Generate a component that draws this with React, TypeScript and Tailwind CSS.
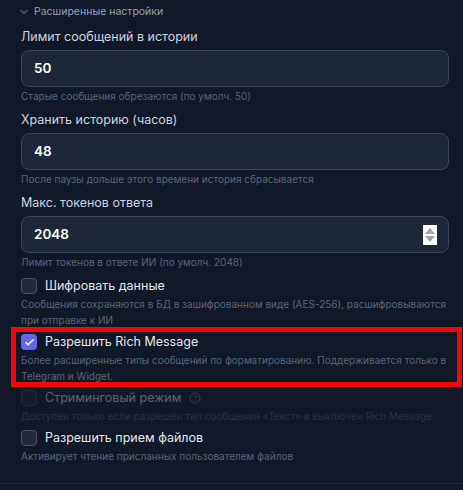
import { ChevronDown, Check, HelpCircle } from 'lucide-react';

interface NumberFieldProps {
  label: string;
  value: string;
  hint: string;
  spinner?: boolean;
}

const NumberField = ({ label, value, hint, spinner }: NumberFieldProps) => (
  <div className="flex flex-col">
    <label className="text-[12.5px] leading-5 text-[#cbd5e1] mb-[3px]">{label}</label>
    <div className="h-[37px] rounded-lg border border-[#3b4556] bg-[#1e2737] flex items-center pl-3 pr-3">
      <span className="flex-1 text-[13.5px] font-semibold text-white">{value}</span>
      {spinner && (
        <div className="w-[14px] h-[20px] bg-white flex flex-col items-center justify-between py-[3px] mr-[-1px]">
          <div className="w-0 h-0 border-l-[5px] border-r-[5px] border-b-[6px] border-l-transparent border-r-transparent border-b-[#9ca3af]" />
          <div className="w-0 h-0 border-l-[5px] border-r-[5px] border-t-[6px] border-l-transparent border-r-transparent border-t-[#9ca3af]" />
        </div>
      )}
    </div>
    <p className="mt-[1px] text-[10px] leading-4 text-[#5b6577]">{hint}</p>
  </div>
);

interface CheckItemProps {
  label: string;
  desc: string;
  checked?: boolean;
  disabled?: boolean;
  help?: boolean;
}

const CheckItem = ({ label, desc, checked, disabled, help }: CheckItemProps) => (
  <div className={disabled ? 'opacity-[0.35]' : ''}>
    <div className="h-5 flex items-center gap-2">
      <div
        className={`w-4 h-4 rounded-[4px] flex items-center justify-center ${
          checked ? 'bg-[#6366f1]' : 'border border-[#4b5563] bg-[#1f2937]'
        }`}
      >
        {checked && <Check size={11} strokeWidth={3.5} className="text-white" />}
      </div>
      <span className="text-[12.5px] text-[#e5e7eb]">{label}</span>
      {help && <HelpCircle size={12} strokeWidth={1.5} className="text-[#9ca3af]" />}
    </div>
    <p className="text-[10px] leading-4 text-[#5b6577]">{desc}</p>
  </div>
);

export default function App() {
  return (
    <div className="min-h-screen bg-[#111827] font-['Inter',sans-serif]">
      <div className="pl-[21px] pr-[14px] pt-[2px] pb-[19px] border-b border-[#1f2937]">
        {/* Section header */}
        <div className="h-5 flex items-center gap-[4px] text-[#94a3b8]">
          <ChevronDown size={12} strokeWidth={2} className="-ml-[3px]" />
          <span className="text-[10.5px]">Расширенные настройки</span>
        </div>

        <div className="mt-[5px] flex flex-col gap-[6px]">
          <NumberField
            label="Лимит сообщений в истории"
            value="50"
            hint="Старые сообщения обрезаются (по умолч. 50)"
          />
          <NumberField
            label="Хранить историю (часов)"
            value="48"
            hint="После паузы дольше этого времени история сбрасывается"
          />
          <NumberField
            label="Макс. токенов ответа"
            value="2048"
            hint="Лимит токенов в ответе ИИ (по умолч. 2048)"
            spinner
          />
        </div>

        <div className="mt-[6px] flex flex-col gap-1">
          <CheckItem
            label="Шифровать данные"
            desc="Сообщения сохраняются в БД в зашифрованном виде (AES-256), расшифровываются при отправке к ИИ"
          />
          <div className="relative">
            <CheckItem
              label="Разрешить Rich Message"
              desc="Более расширенные типы сообщений по форматированию. Поддерживается только в Telegram и Widget."
              checked
            />
            {/* highlight frame */}
            <div className="absolute -left-[10px] -right-[13px] -top-[5px] -bottom-[3px] border-[5px] border-[#ee0a0a] pointer-events-none" />
          </div>
          <CheckItem
            label="Стриминговый режим"
            desc="Доступен только если разрешён тип сообщений «Текст» и выключен Rich Message"
            disabled
            help
          />
          <CheckItem
            label="Разрешить прием файлов"
            desc="Активирует чтение присланных пользователем файлов"
          />
        </div>
      </div>
    </div>
  );
}
